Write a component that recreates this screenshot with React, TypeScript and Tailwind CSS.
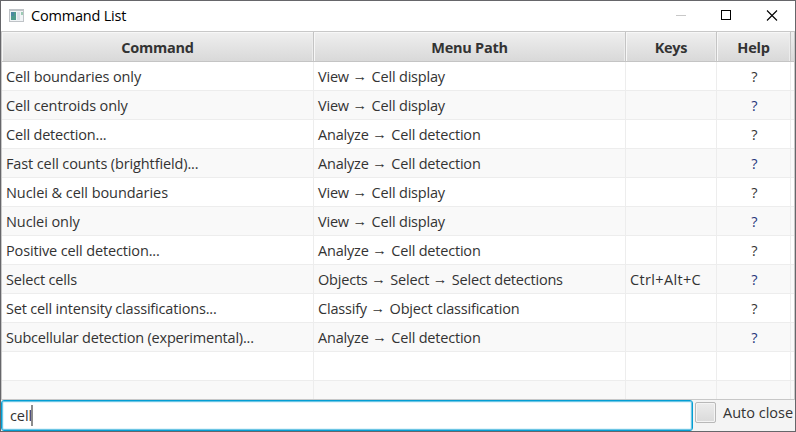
import React from "react";

type Row = { command: string; path: string[]; keys?: string; link?: boolean; tracking?: string };

const display = ["View", "Cell display"];
const detection = ["Analyze", "Cell detection"];

const rows: Row[] = [
  { command: "Cell boundaries only", path: display, tracking: "tracking-[-0.13px]" },
  { command: "Cell centroids only", path: display, link: true, tracking: "tracking-[-0.12px]" },
  { command: "Cell detection...", path: detection },
  { command: "Fast cell counts (brightfield)...", path: detection, link: true, tracking: "tracking-[-0.12px]" },
  { command: "Nuclei & cell boundaries", path: display, tracking: "tracking-[-0.06px]" },
  { command: "Nuclei only", path: display, link: true, tracking: "tracking-[-0.08px]" },
  { command: "Positive cell detection...", path: detection, tracking: "tracking-[-0.14px]" },
  { command: "Select cells", path: ["Objects", "Select", "Select detections"], keys: "Ctrl+Alt+C", link: true },
  { command: "Set cell intensity classifications...", path: ["Classify", "Object classification"] },
  { command: "Subcellular detection (experimental)...", path: detection, link: true, tracking: "tracking-[-0.2px]" },
];

const grid = "grid grid-cols-[312px_312px_91px_74px_3px]";
const headCell =
  "flex items-center justify-center border-r border-[#c4c4c4] bg-gradient-to-b from-[#efefef] to-[#d9d9d9] shadow-[inset_1px_1px_0_#f7f7f7,inset_-1px_0_0_#ececec] pt-[3px] last:border-r-0 last:shadow-none";
const cell = "flex items-center border-r border-[#ededed] pl-1 pt-0.5 whitespace-pre";

function TitleBar() {
  return (
    <div className="flex h-[30px] shrink-0 items-center bg-white pl-2">
      <svg width="15" height="14" viewBox="0 0 15 14" className="shrink-0" shapeRendering="crispEdges">
        <rect width="15" height="13" y="0" fill="#bfc3c7" />
        <rect x="1" y="2" width="13" height="10" fill="#f1f4f6" />
        <rect x="2" y="3" width="5" height="8" fill="#4f9a8c" />
        <rect x="2" y="3" width="3" height="4" fill="#4c88a0" />
        <rect x="8" y="3" width="3" height="8" fill="#dce1e8" />
        <rect x="12" y="3" width="2" height="3" fill="#9ccbb4" />
      </svg>
      <span className="ml-[7px] text-[14.5px] tracking-[-0.2px] text-black">Command List</span>
      <div className="ml-auto flex items-center">
        <svg width="120" height="30" viewBox="0 0 120 30" fill="none">
          <path d="M1 14.5h10" stroke="#c8c8c8" />
          <rect x="46.5" y="9.5" width="9" height="9" stroke="#000" />
          <path d="M92 9.5l10 10M102 9.5l-10 10" stroke="#000" strokeWidth="1.1" />
        </svg>
      </div>
    </div>
  );
}

function MenuPath({ parts }: { parts: string[] }) {
  return (
    <span className="tracking-[-0.2px]">
      {parts.map((part, i) => (
        <React.Fragment key={i}>
          {i > 0 && (
            <>
              {" "}
              <span className="mr-[1.25px] inline-block -translate-y-px">→</span>
              {" "}
            </>
          )}
          {part}
        </React.Fragment>
      ))}
    </span>
  );
}

export default function App() {
  return (
    <div className="flex h-[432px] w-[796px] flex-col overflow-hidden border border-[#66666a] bg-[#f4f4f4] font-['Open_Sans','Noto_Sans',sans-serif] text-[14.5px] leading-5 text-[#333]">
      <TitleBar />
      <div className="flex h-[369px] shrink-0 flex-col overflow-hidden border border-[#c8c8c8] bg-white">
        <div className={`${grid} h-[30px] shrink-0 border-b border-[#c4c4c4] text-[14.5px] font-bold tracking-[-0.25px]`}>
          {["Command", "Menu Path", "Keys", "Help", ""].map((h) => (
            <div key={h} className={headCell}><span>{h}</span></div>
          ))}
        </div>
        {[...rows, null, null].map((r, i) => (
          <div key={i} className={`${grid} h-[29px] shrink-0 border-b border-[#ededed] ${i % 2 ? "bg-[#f9f9f9]" : "bg-white"}`}>
            <div className={cell}><span className={r?.tracking ?? "tracking-[-0.18px]"}>{r?.command}</span></div>
            <div className={cell}>{r && <MenuPath parts={r.path} />}</div>
            <div className={cell}><span className="tracking-[0.35px]">{r?.keys}</span></div>
            <div className={`${cell} justify-center pl-0 pr-0.5`}><span className={r?.link ? "text-[#26367c]" : ""}>{r && "?"}</span></div>
            <div />
          </div>
        ))}
      </div>
      <div className="flex h-[31px] shrink-0">
        <div className="flex h-[31px] w-[692px] items-center rounded-[3px] border border-[#039ed3] bg-white pl-2 shadow-[inset_0_0_0_1px_#6cc5e4,inset_0_0_0_2px_#e4f5fb]">
          <span className="tracking-[-0.1px]">cell</span><span className="-ml-px h-[21px] w-0.5 bg-[#8c8c8c]" />
        </div>
        <div className="ml-0.5 mt-0.5 h-[21px] w-[21px] rounded-[2px] border border-[#b8b8b8] bg-gradient-to-b from-[#ececec] to-[#dadada] shadow-[inset_0_0_0_1px_#f4f4f4]" />
        <span className="ml-[7px] mt-[3px] whitespace-pre">Auto close</span>
      </div>
    </div>
  );
}
